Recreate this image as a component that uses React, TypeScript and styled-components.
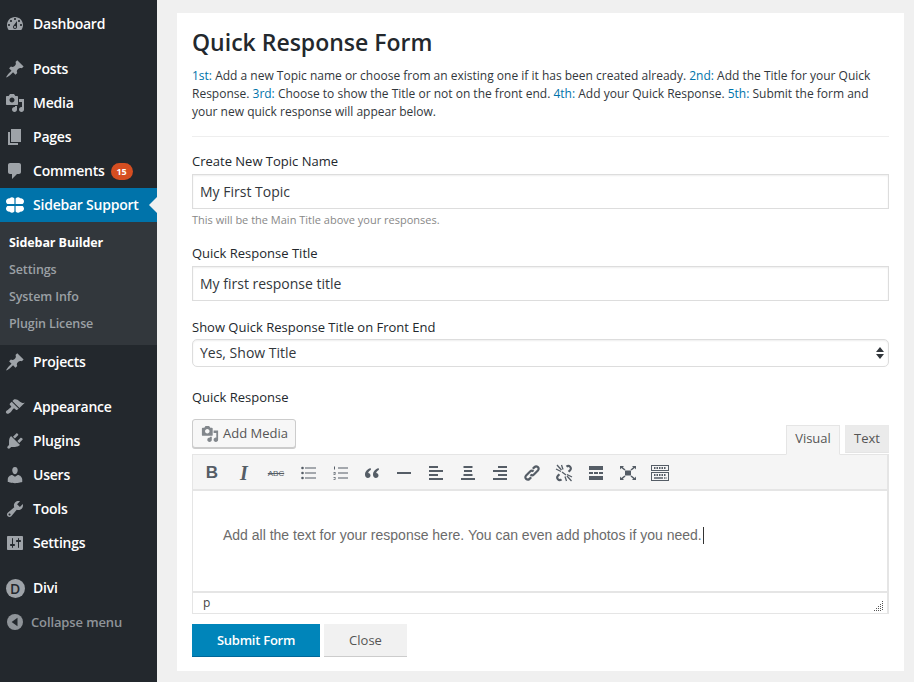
import React from 'react';
import styled, { createGlobalStyle } from 'styled-components';

const GlobalStyle = createGlobalStyle`
  html, body { margin: 0; padding: 0; background: #f0f0f0; }
  body { font-family: "Open Sans", "Liberation Sans", sans-serif; color: #32373c; }
  * { box-sizing: border-box; }
`;

const Page = styled.div`
  display: flex;
  width: 914px;
  height: 682px;
  overflow: hidden;
`;

const Sidebar = styled.nav`
  width: 157px;
  flex: none;
  background: #23282d;
  padding-top: 7px;
`;

const MenuItem = styled.div<{ $active?: boolean; $gap?: boolean }>`
  position: relative;
  display: flex;
  align-items: center;
  height: 34px;
  padding-bottom: 2px;
  margin-top: ${(p) => (p.$gap ? '11px' : '0')};
  background: ${(p) => (p.$active ? '#0073aa' : 'transparent')};
  color: #fff;
  font-size: 14px;
  font-weight: 600;
  letter-spacing: -0.23px;
`;

const IconSlot = styled.span<{ $color?: string }>`
  width: 33px;
  flex: none;
  display: flex;
  justify-content: center;
  padding-top: 2px;
  padding-right: 3px;
  color: ${(p) => p.$color || '#9ea3a8'};
  svg { display: block; }
`;

const Badge = styled.span`
  margin: 2px 0 0 6px;
  width: 22px;
  height: 17px;
  border-radius: 9px;
  background: #d54e21;
  color: #fff;
  font-size: 9px;
  font-weight: 700;
  display: flex;
  align-items: center;
  justify-content: center;
  letter-spacing: 0;
`;

const ActiveArrow = styled.span`
  position: absolute;
  right: 0;
  top: 9px;
  border-style: solid;
  border-width: 8px 8px 8px 0;
  border-color: transparent #f0f0f0 transparent transparent;
`;

const Submenu = styled.div`
  background: #32373c;
  padding: 7px 0 8px;
`;

const SubItem = styled.div<{ $current?: boolean }>`
  height: 27px;
  line-height: 27px;
  padding-left: 9px;
  font-size: 12.5px;
  letter-spacing: -0.1px;
  font-weight: ${(p) => (p.$current ? 700 : 600)};
  color: ${(p) => (p.$current ? '#fff' : '#9ba0a5')};
`;

const Collapse = styled.div`
  display: flex;
  align-items: center;
  height: 34px;
  color: #8f9499;
  font-size: 13px;
  font-weight: 600;
  letter-spacing: -0.12px;
`;

const CollapseIcon = styled.span`
  width: 31px;
  flex: none;
  display: flex;
  justify-content: center;
  padding-right: 1px;
`;

const DiviMark = styled.span`
  width: 19px;
  height: 19px;
  border-radius: 50%;
  background: #9ea3a8;
  color: #23282d;
  font-size: 14px;
  font-weight: 600;
  line-height: 19px;
  text-align: center;
`;

const Main = styled.main`
  flex: 1;
  padding: 13px 10px 11px 20px;
`;

const Card = styled.section`
  background: #fff;
  height: 658px;
  padding: 15px 15px 0;
`;

const Title = styled.h1`
  margin: 0;
  font-size: 23px;
  line-height: 28px;
  font-weight: 600;
  color: #23282d;
`;

const Intro = styled.p`
  margin: 11px 0 0;
  font-size: 12px;
  line-height: 18px;
  color: #32373c;
  b { font-weight: 400; color: #0073aa; }
`;

const Rule = styled.hr`
  border: 0;
  border-top: 1px solid #eee;
  margin: 15px 0 0;
`;

const Label = styled.label`
  display: block;
  font-size: 13px;
  line-height: 18px;
  color: #23282d;
`;

const Field = styled.div<{ $top: number }>`
  margin-top: ${(p) => p.$top}px;
`;

const TextBox = styled.div`
  margin-top: 4px;
  height: 35px;
  border: 1px solid #ddd;
  padding: 0 7px;
  font-size: 14px;
  line-height: 33px;
  color: #32373c;
  box-shadow: inset 0 1px 2px rgba(0, 0, 0, 0.07);
`;

const Help = styled.div`
  margin-top: 3px;
  font-size: 11px;
  line-height: 16px;
  color: #888;
`;

const SelectBox = styled(TextBox)`
  position: relative;
  margin-top: 3px;
  height: 28px;
  line-height: 26px;
  border-radius: 5px;
  padding-right: 24px;
`;

const SelectArrows = styled.svg`
  position: absolute;
  right: 3px;
  top: 6px;
`;

const EditorTop = styled.div`
  display: flex;
  align-items: flex-end;
  justify-content: space-between;
  margin-top: 13px;
  height: 35px;
`;

const MediaButton = styled.div`
  align-self: flex-start;
  display: flex;
  align-items: center;
  gap: 4px;
  width: 104px;
  height: 29px;
  padding: 0 0 2px 8px;
  border: 1px solid #ccc;
  border-radius: 3px;
  background: #f7f7f7;
  box-shadow: 0 1px 0 #ccc;
  font-size: 13px;
  color: #555;
  svg { color: #82878c; display: block; margin-top: 2px; }
`;

const Tabs = styled.div`
  display: flex;
  gap: 5px;
`;

const Tab = styled.div<{ $active?: boolean }>`
  width: ${(p) => (p.$active ? '54px' : '44px')};
  height: ${(p) => (p.$active ? '30px' : '28px')};
  margin-bottom: ${(p) => (p.$active ? '-1px' : '0')};
  position: relative;
  border: 1px solid ${(p) => (p.$active ? '#e5e5e5' : '#eaeaea')};
  border-bottom-color: ${(p) => (p.$active ? '#f5f5f5' : '#e5e5e5')};
  background: ${(p) => (p.$active ? '#f5f5f5' : '#ebebeb')};
  font-size: 13px;
  line-height: 24px;
  text-align: center;
  color: #555;
`;

const Editor = styled.div`
  border: 1px solid #e5e5e5;
  border-width: 1px 2px 1px 1px;
  height: 160px;
  display: flex;
  flex-direction: column;
`;

const Toolbar = styled.div`
  height: 36px;
  flex: none;
  display: flex;
  align-items: center;
  padding: 2px 0 0 3px;
  background: #f5f5f5;
  border-bottom: 2px solid #e5e5e5;
  color: #555d66;
`;

const ToolButton = styled.span`
  width: 32px;
  flex: none;
  display: flex;
  justify-content: center;
  align-items: center;
  svg { display: block; }
`;

const BoldGlyph = styled.span`
  font-family: "Liberation Sans", sans-serif;
  font-size: 17px;
  font-weight: 700;
`;

const ItalicGlyph = styled(BoldGlyph)`
  font-family: "Liberation Serif", serif;
  font-size: 20px;
  font-style: italic;
`;

const StrikeGlyph = styled.span`
  font-family: "Liberation Sans", sans-serif;
  font-size: 8px;
  text-decoration: line-through;
`;

const EditorBody = styled.div`
  flex: 1;
  padding: 36px 0 0 30px;
  font-family: "Liberation Sans", Arial, sans-serif;
  font-size: 14px;
  line-height: 17px;
  color: #6b6b6b;
`;

const Caret = styled.span`
  display: inline-block;
  width: 1px;
  height: 17px;
  margin-left: 1px;
  background: #333;
  vertical-align: top;
`;

const StatusBar = styled.div`
  position: relative;
  height: 22px;
  flex: none;
  border-top: 2px solid #e5e5e5;
  padding-left: 10px;
  font-size: 12px;
  line-height: 19px;
  color: #444;
`;

const Grip = styled.svg`
  position: absolute;
  right: 3px;
  bottom: 2px;
`;

const Actions = styled.div`
  display: flex;
  gap: 4px;
  margin-top: 10px;
`;

const SubmitButton = styled.div`
  width: 128px;
  height: 33px;
  background: #0085ba;
  border-bottom: 1px solid #006799;
  color: #fff;
  font-size: 13px;
  font-weight: 600;
  letter-spacing: -0.25px;
  line-height: 32px;
  text-align: center;
`;

const CloseButton = styled.div`
  width: 83px;
  height: 33px;
  background: #f1f1f1;
  border-bottom: 1px solid #ccc;
  color: #555;
  font-size: 13px;
  line-height: 32px;
  text-align: center;
`;

const P = {
  dashboard: 'M3.76 16h12.48c1.1-1.37 1.76-3.11 1.76-5 0-4.42-3.58-8-8-8s-8 3.58-8 8c0 1.89.66 3.63 1.76 5zM10 4c.55 0 1 .45 1 1s-.45 1-1 1-1-.45-1-1 .45-1 1-1zM6 6c.55 0 1 .45 1 1s-.45 1-1 1-1-.45-1-1 .45-1 1-1zm8 0c.55 0 1 .45 1 1s-.45 1-1 1-1-.45-1-1 .45-1 1-1zm-5.37 5.55L12 7v6c0 1.1-.9 2-2 2s-2-.9-2-2c0-.57.24-1.08.63-1.45zM4 10c.55 0 1 .45 1 1s-.45 1-1 1-1-.45-1-1 .45-1 1-1zm12 0c.55 0 1 .45 1 1s-.45 1-1 1-1-.45-1-1 .45-1 1-1zm-5 3c0-.55-.45-1-1-1s-1 .45-1 1 .45 1 1 1 1-.45 1-1z',
  pin: 'M10.44 3.02l1.82-1.82 6.36 6.35-1.83 1.82c-1.05-.68-2.48-.57-3.41.36l-.75.75c-.92.93-1.04 2.35-.35 3.41l-1.83 1.82-2.41-2.41-2.8 2.79c-.42.42-3.38 2.71-3.8 2.29s1.86-3.39 2.28-3.81l2.79-2.79L4.1 9.36l1.83-1.82c1.05.69 2.48.57 3.4-.36l.75-.75c.93-.92 1.05-2.35.36-3.41z',
  media: 'M13 11V4c0-.55-.45-1-1-1h-1.67L9 1H5L3.67 3H2c-.55 0-1 .45-1 1v7c0 .55.45 1 1 1h10c.55 0 1-.45 1-1zM7 4.5c1.38 0 2.5 1.12 2.5 2.5S8.38 9.5 7 9.5 4.5 8.38 4.5 7 5.62 4.5 7 4.5zM14 6h5v10.5c0 1.38-1.12 2.5-2.5 2.5S14 17.88 14 16.5s1.12-2.5 2.5-2.5c.17 0 .34.02.5.05V9h-3V6zm-4 8.05V13h2v3.5c0 1.38-1.12 2.5-2.5 2.5S7 17.88 7 16.5 8.12 14 9.5 14c.17 0 .34.02.5.05z',
  page: 'M6 15V2h10v13H6zm-1 1h8v2H3V5h2v11z',
  comment: 'M5 2h9c1.1 0 2 .9 2 2v7c0 1.1-.9 2-2 2h-2l-5 5v-5H5c-1.1 0-2-.9-2-2V4c0-1.1.9-2 2-2z',
  brush: 'M14.48 11.06L7.41 3.99l1.5-1.5c.5-.56 2.3-.47 3.51.32 1.21.8 1.43 1.28 2.91 2.1 1.18.64 2.45 1.26 4.45.85zm-.71.71L6.7 4.7 4.93 6.47c-.39.39-.39 1.02 0 1.41l1.06 1.06c.39.39.39 1.03 0 1.42-.6.6-1.43 1.11-2.21 1.69-.35.26-.7.53-1.01.84C1.43 13.23.4 14.89 1.05 15.7c.15.19.3.37.45.52.15.15.33.3.52.45.81.65 2.47-.38 3.81-1.72.31-.31.58-.66.84-1.01.58-.78 1.09-1.61 1.69-2.21.39-.39 1.03-.39 1.42 0l1.06 1.06c.39.39 1.02.39 1.41 0z',
  plug: 'M13.11 4.36L9.87 7.6 8 5.73l3.24-3.24c.35-.34 1.05-.2 1.56.32.52.51.66 1.21.31 1.55zm-8 1.77l.91-1.12 9.01 9.01-1.19.84c-.71.71-2.63 1.16-3.82 1.16H6.14L4.9 17.26c-.59.59-1.54.59-2.12 0-.59-.58-.59-1.53 0-2.12l1.24-1.24v-3.88c0-1.13.4-3.19 1.09-3.89zm7.26 3.97l3.24-3.24c.34-.35 1.04-.21 1.55.31.52.51.66 1.21.31 1.55l-3.24 3.25z',
  user: 'M10 9.25c-2.27 0-2.73-3.44-2.73-3.44C7 4.02 7.82 2 9.97 2c2.16 0 2.98 2.02 2.71 3.81 0 0-.41 3.44-2.68 3.44zm0 2.57L12.72 10c2.39 0 4.52 2.33 4.52 4.53v2.49s-3.65 1.13-7.24 1.13c-3.65 0-7.24-1.13-7.24-1.13v-2.49c0-2.25 1.94-4.48 4.47-4.48z',
  wrench: 'M16.68 9.77c-1.34 1.34-3.3 1.67-4.95.99l-5.41 6.52c-.99.99-2.59.99-3.58 0s-.99-2.59 0-3.57l6.52-5.42c-.68-1.65-.35-3.61.99-4.95 1.28-1.28 3.12-1.62 4.72-1.06l-2.89 2.89 2.82 2.82 2.86-2.87c.53 1.58.18 3.39-1.08 4.65zM3.81 16.21c.4.39 1.04.39 1.43 0 .4-.4.4-1.04 0-1.43-.39-.4-1.03-.4-1.43 0-.39.39-.39 1.03 0 1.43z',
  sliders: 'M18 16V4c0-.55-.45-1-1-1H3c-.55 0-1 .45-1 1v12c0 .55.45 1 1 1h14c.55 0 1-.45 1-1zM8 11h1c.55 0 1 .45 1 1s-.45 1-1 1H8v1.5c0 .28-.22.5-.5.5s-.5-.22-.5-.5V13H6c-.55 0-1-.45-1-1s.45-1 1-1h1V5.5c0-.28.22-.5.5-.5s.5.22.5.5V11zm5-2h-1c-.55 0-1-.45-1-1s.45-1 1-1h1V5.5c0-.28.22-.5.5-.5s.5.22.5.5V7h1c.55 0 1 .45 1 1s-.45 1-1 1h-1v5.5c0 .28-.22.5-.5.5s-.5-.22-.5-.5V9z',
};

const Dash = ({ d, size = 20 }: { d: string; size?: number }) => (
  <svg width={size} height={size} viewBox="0 0 20 20" fill="currentColor">
    <path d={d} />
  </svg>
);

// one leaf, mirrored into the four corners
const LEAF = 'M9.400 9.100V3.400C7.800 1.800 5.800 1.900 4.900 3.300 2.900 3 .8 4.500 1 6.500c.1 1 .6 2 1.400 2.600z';

const Clover = () => (
  <svg width="20" height="20" viewBox="0 0 20 20" fill="currentColor">
    <path d={LEAF} />
    <path d={LEAF} transform="matrix(-1 0 0 1 20 0)" />
    <path d={LEAF} transform="matrix(1 0 0 -1 0 20)" />
    <path d={LEAF} transform="matrix(-1 0 0 -1 20 20)" />
  </svg>
);

const ListBullet = () => (
  <svg width="15" height="14" viewBox="0 0 15 14" fill="currentColor">
    <circle cx="1.500" cy="2" r="1.300" />
    <circle cx="1.500" cy="7" r="1.300" />
    <circle cx="1.500" cy="12" r="1.300" />
    <path d="M4 1.500h11v1H4zM4 6.500h11v1H4zM4 11.500h11v1H4z" />
  </svg>
);

const ListNumber = () => (
  <svg width="15" height="14" viewBox="0 0 15 14" fill="currentColor">
    <path d="M1 .5h1v3H1zM.5 6h2v.7H.500zM.5 8h2v.7H.500zM.5 11h2v.7H.500zM.5 13h2v.7H.500zM1.800 6.500h.700v1.800h-.700zM.5 7.400h.800v.8H.500zM1.800 11.500h.700v2h-.700z" />
    <path d="M5 1.500h10v1H5zM5 6.500h10v1H5zM5 11.500h10v1H5z" />
  </svg>
);

const Quote = () => (
  <svg width="16" height="12" viewBox="0 0 16 12" fill="currentColor">
    <path d="M6.500 1C3.500 2 1 4.500 1 7.500 1 9.800 2.200 11 3.900 11c1.500 0 2.600-1.100 2.600-2.500S5.500 6 4.200 6c.3-1.300 1.300-2.400 2.800-3.200zM14.500 1c-3 1-5.500 3.500-5.500 6.500 0 2.300 1.200 3.500 2.900 3.500 1.500 0 2.600-1.100 2.600-2.500S13.500 6 12.200 6c.3-1.300 1.300-2.400 2.800-3.200z" />
  </svg>
);

const HorizontalRule = () => (
  <svg width="14" height="2" viewBox="0 0 14 2" fill="currentColor">
    <rect width="14" height="2" />
  </svg>
);

const Align = ({ kind }: { kind: 'left' | 'center' | 'right' }) => {
  const x = (w: number) => (kind === 'left' ? 0 : kind === 'center' ? (14 - w) / 2 : 14 - w);
  return (
    <svg width="14" height="14" viewBox="0 0 14 14" fill="currentColor">
      <rect x={x(9)} y="0" width="9" height="2" />
      <rect x={x(kind === 'center' ? 8 : 14)} y="4" width={kind === 'center' ? 8 : 14} height="2" />
      <rect x={x(9)} y="8" width="9" height="2" />
      <rect x={x(14)} y="12" width="14" height="2" />
    </svg>
  );
};

const LinkIcon = () => (
  <svg width="18" height="18" viewBox="0 0 18 18" fill="none" stroke="currentColor" strokeWidth="2.200">
    <path d="M7.500 10.500c1 1 2.400 1 3.400 0l4-4c1-1 1-2.500 0-3.400s-2.400-1-3.400 0L9.800 4.800" />
    <path d="M10.500 7.500c-1-1-2.400-1-3.400 0l-4 4c-1 1-1 2.500 0 3.400s2.400 1 3.400 0l1.700-1.700" />
  </svg>
);

const UnlinkIcon = () => (
  <svg width="18" height="18" viewBox="0 0 18 18" fill="none" stroke="currentColor">
    <path strokeWidth="2.200" d="M11.500 2.700c1.200-1 2.600-1 3.600 0s1 2.500 0 3.500l-1.500 1.500M6.500 15.300c-1.200 1-2.600 1-3.600 0s-1-2.500 0-3.500l1.500-1.500" />
    <path strokeWidth="1.300" d="M2 1l4.500 5M1 5l5 2.500M6.500 1l1.500 4.500M16.500 17l-4.500-5M17 13l-5-2.500M11.500 17l-1.500-4.500M7 8l4 3" />
  </svg>
);

const ReadMore = () => (
  <svg width="14" height="14" viewBox="0 0 14 14" fill="currentColor">
    <rect width="14" height="4" />
    <rect y="6" width="4" height="2" />
    <rect x="5" y="6" width="4" height="2" />
    <rect x="10" y="6" width="4" height="2" />
    <rect y="10" width="14" height="4" />
  </svg>
);

const Fullscreen = () => (
  <svg width="16" height="14" viewBox="0 0 16 14" fill="currentColor">
    <rect x="5" y="4.500" width="6" height="5" />
    <path d="M0 0h4L2.800 1.200 5.500 3.500 4.500 4.500 1.300 2 0 3.500zM16 0h-4l1.200 1.200-2.700 2.300 1 1 3.200-2.500L16 3.500zM0 14h4l-1.200-1.200 2.700-2.300-1-1L1.300 12 0 10.500zM16 14h-4l1.200-1.200-2.700-2.300 1-1 3.200 2.500 1.300-1.500z" />
  </svg>
);

const Kitchen = () => (
  <svg width="18" height="16" viewBox="0 0 18 16" fill="none" stroke="currentColor">
    <rect x=".5" y=".5" width="17" height="5" />
    <rect x=".5" y="7.500" width="17" height="8" />
    <path strokeDasharray="1.500 1" strokeWidth="2" d="M3 3h12M3 10h12" />
    <path strokeWidth="1.500" d="M3 13h9" />
    <path strokeDasharray="1.500 1" strokeWidth="1.500" d="M13 13h3" />
  </svg>
);

const CollapseGlyph = () => (
  <svg width="16" height="16" viewBox="0 0 16 16">
    <circle cx="8" cy="8" r="8" fill="#8f9499" />
    <path d="M10.500 3.800v8.400L4.600 8z" fill="#23282d" />
  </svg>
);

type MenuEntry = { label: string; icon: string; gap?: boolean; badge?: string };

const topItems: MenuEntry[] = [
  { label: 'Dashboard', icon: P.dashboard },
  { label: 'Posts', icon: P.pin, gap: true },
  { label: 'Media', icon: P.media },
  { label: 'Pages', icon: P.page },
  { label: 'Comments', icon: P.comment, badge: '15' },
];

const lowerItems: MenuEntry[] = [
  { label: 'Projects', icon: P.pin },
  { label: 'Appearance', icon: P.brush, gap: true },
  { label: 'Plugins', icon: P.plug },
  { label: 'Users', icon: P.user },
  { label: 'Tools', icon: P.wrench },
  { label: 'Settings', icon: P.sliders },
];

const renderItem = (item: MenuEntry) => (
  <MenuItem key={item.label} $gap={item.gap}>
    <IconSlot><Dash d={item.icon} /></IconSlot>
    {item.label}
    {item.badge && <Badge>{item.badge}</Badge>}
  </MenuItem>
);

const App: React.FC = () => {
  return (
    <Page>
      <GlobalStyle />
      <Sidebar>
        {topItems.map(renderItem)}
        <MenuItem $active>
          <IconSlot $color="#fff"><Clover /></IconSlot>
          Sidebar Support
          <ActiveArrow />
        </MenuItem>
        <Submenu>
          <SubItem $current>Sidebar Builder</SubItem>
          <SubItem>Settings</SubItem>
          <SubItem>System Info</SubItem>
          <SubItem>Plugin License</SubItem>
        </Submenu>
        {lowerItems.map(renderItem)}
        <MenuItem $gap>
          <IconSlot><DiviMark>D</DiviMark></IconSlot>
          Divi
        </MenuItem>
        <Collapse>
          <CollapseIcon><CollapseGlyph /></CollapseIcon>
          Collapse menu
        </Collapse>
      </Sidebar>
      <Main>
        <Card>
          <Title>Quick Response Form</Title>
          <Intro>
            <b>1st:</b> Add a new Topic name or choose from an existing one if it has been created already. <b>2nd:</b> Add the Title for your Quick Response. <b>3rd:</b> Choose to show the Title or not on the front end. <b>4th:</b> Add your Quick Response. <b>5th:</b> Submit the form and your new quick response will appear below.
          </Intro>
          <Rule />
          <Field $top={15}>
            <Label>Create New Topic Name</Label>
            <TextBox>My First Topic</TextBox>
            <Help>This will be the Main Title above your responses.</Help>
          </Field>
          <Field $top={16}>
            <Label>Quick Response Title</Label>
            <TextBox>My first response title</TextBox>
          </Field>
          <Field $top={17}>
            <Label>Show Quick Response Title on Front End</Label>
            <SelectBox>
              Yes, Show Title
              <SelectArrows width="10" height="14" viewBox="0 0 10 14" fill="#32373c">
                <path d="M5 1l4 5H1zM5 13L1 8h8z" />
              </SelectArrows>
            </SelectBox>
          </Field>
          <Field $top={21}>
            <Label>Quick Response</Label>
            <EditorTop>
              <MediaButton>
                <Dash d={P.media} size={18} />
                Add Media
              </MediaButton>
              <Tabs>
                <Tab $active>Visual</Tab>
                <Tab>Text</Tab>
              </Tabs>
            </EditorTop>
            <Editor>
              <Toolbar>
                <ToolButton><BoldGlyph>B</BoldGlyph></ToolButton>
                <ToolButton><ItalicGlyph>I</ItalicGlyph></ToolButton>
                <ToolButton><StrikeGlyph>ABC</StrikeGlyph></ToolButton>
                <ToolButton><ListBullet /></ToolButton>
                <ToolButton><ListNumber /></ToolButton>
                <ToolButton><Quote /></ToolButton>
                <ToolButton><HorizontalRule /></ToolButton>
                <ToolButton><Align kind="left" /></ToolButton>
                <ToolButton><Align kind="center" /></ToolButton>
                <ToolButton><Align kind="right" /></ToolButton>
                <ToolButton><LinkIcon /></ToolButton>
                <ToolButton><UnlinkIcon /></ToolButton>
                <ToolButton><ReadMore /></ToolButton>
                <ToolButton><Fullscreen /></ToolButton>
                <ToolButton><Kitchen /></ToolButton>
              </Toolbar>
              <EditorBody>
                Add all the text for your response here. You can even add photos if you need.<Caret />
              </EditorBody>
              <StatusBar>
                p
                <Grip width="10" height="10" viewBox="0 0 10 10" fill="#555">
                  <path d="M8 0h1v1H8zM8 2h1v1H8zM6 3h1v1H6zM8 4h1v1H8zM6 5h1v1H6zM4 5h1v1H4zM8 6h1v1H8zM6 7h1v1H6zM4 7h1v1H4zM2 7h1v1H2zM8 8h1v1H8zM6 9h1v1H6zM4 9h1v1H4zM2 9h1v1H2zM0 9h1v1H0z" />
                </Grip>
              </StatusBar>
            </Editor>
            <Actions>
              <SubmitButton>Submit Form</SubmitButton>
              <CloseButton>Close</CloseButton>
            </Actions>
          </Field>
        </Card>
      </Main>
    </Page>
  );
};

export default App;
